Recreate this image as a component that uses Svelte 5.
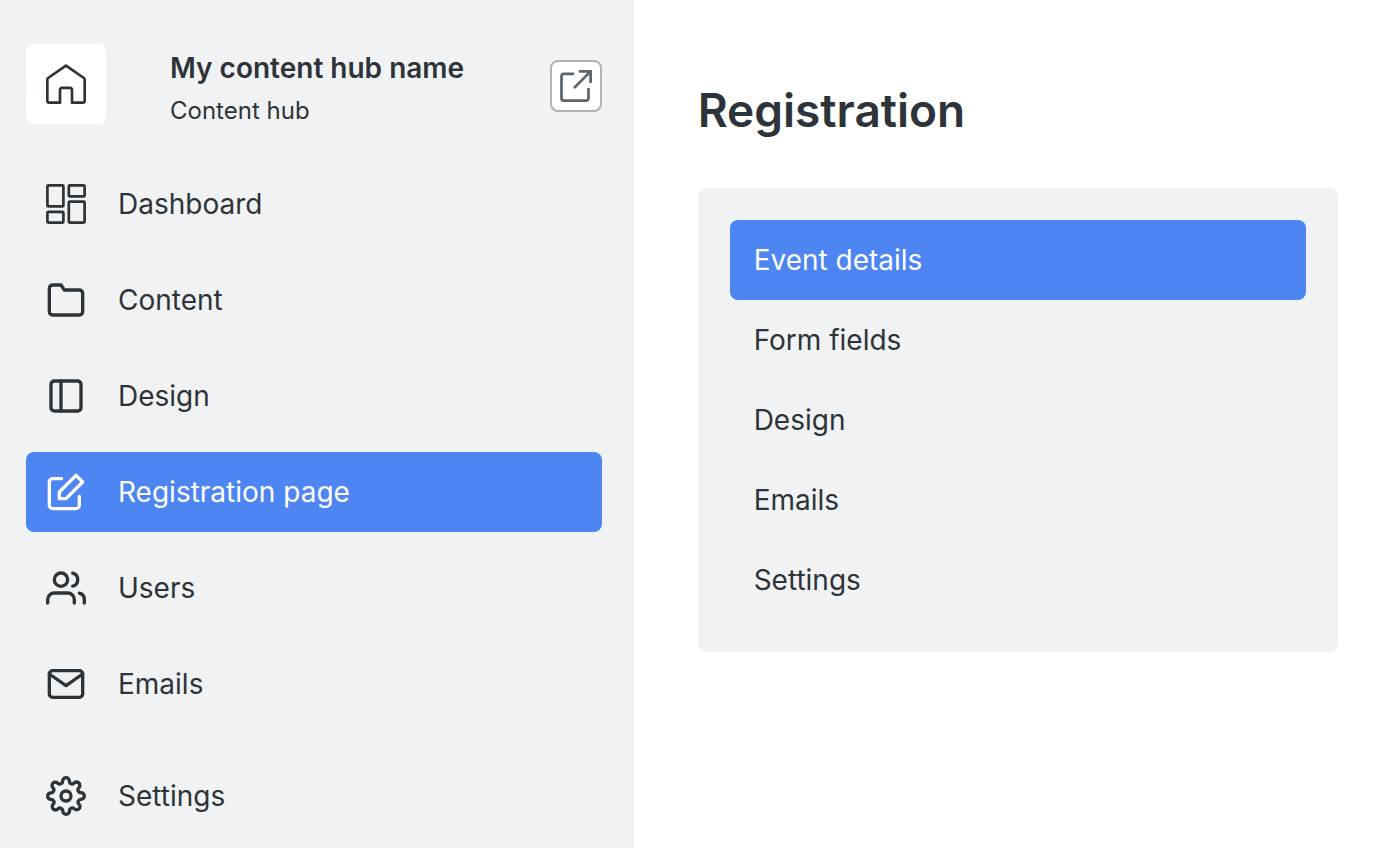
<script lang="ts">
	// Content hub admin: main navigation rail on the left, the registration
	// section with its own sub menu on the right.
	type IconName = 'dashboard' | 'folder' | 'sidebar' | 'edit' | 'users' | 'mail' | 'settings';

	const navItems: { id: string; label: string; icon: IconName }[] = [
		{ id: 'dashboard', label: 'Dashboard', icon: 'dashboard' },
		{ id: 'content', label: 'Content', icon: 'folder' },
		{ id: 'design', label: 'Design', icon: 'sidebar' },
		{ id: 'registration', label: 'Registration page', icon: 'edit' },
		{ id: 'users', label: 'Users', icon: 'users' },
		{ id: 'emails', label: 'Emails', icon: 'mail' },
		{ id: 'settings', label: 'Settings', icon: 'settings' }
	];

	const sections = ['Event details', 'Form fields', 'Design', 'Emails', 'Settings'];

	let activeNav = $state('registration');
	let activeSection = $state('Event details');
</script>

{#snippet icon(name: IconName)}
	{#if name === 'dashboard'}
		<svg class="icon thin" viewBox="0 0 40 40" aria-hidden="true">
			<rect x="1.4" y="1.4" width="16" height="21" rx="1" />
			<rect x="22.8" y="1.4" width="15.8" height="11" rx="1" />
			<rect x="1.4" y="27.8" width="16" height="10.8" rx="1" />
			<rect x="22.8" y="17.6" width="15.8" height="21" rx="1" />
		</svg>
	{:else}
		<svg class="icon" viewBox="0 0 24 24" aria-hidden="true">
			{#if name === 'folder'}
				<path d="M22 19a2 2 0 0 1-2 2H4a2 2 0 0 1-2-2V5a2 2 0 0 1 2-2h5l2 3h9a2 2 0 0 1 2 2z" />
			{:else if name === 'sidebar'}
				<rect x="3" y="3" width="18" height="18" rx="2" />
				<path d="M9 3v18" />
			{:else if name === 'edit'}
				<path d="M20 14.66V20a2 2 0 0 1-2 2H4a2 2 0 0 1-2-2V6a2 2 0 0 1 2-2h5.34" />
				<polygon points="18 2 22 6 12 16 8 16 8 12 18 2" />
			{:else if name === 'users'}
				<path d="M17 21v-2a4 4 0 0 0-4-4H5a4 4 0 0 0-4 4v2" />
				<circle cx="9" cy="7" r="4" />
				<path d="M23 21v-2a4 4 0 0 0-3-3.87" />
				<path d="M16 3.13a4 4 0 0 1 0 7.75" />
			{:else if name === 'mail'}
				<path d="M4 4h16c1.1 0 2 .9 2 2v12c0 1.1-.9 2-2 2H4c-1.1 0-2-.9-2-2V6c0-1.1.9-2 2-2z" />
				<polyline points="22 6 12 13 2 6" />
			{:else if name === 'settings'}
				<circle cx="12" cy="12" r="3" />
				<path
					d="M19.4 15a1.65 1.65 0 0 0 .33 1.82l.06.06a2 2 0 0 1 0 2.83 2 2 0 0 1-2.83 0l-.06-.06a1.65 1.65 0 0 0-1.82-.33 1.65 1.65 0 0 0-1 1.51V21a2 2 0 0 1-2 2 2 2 0 0 1-2-2v-.09A1.65 1.65 0 0 0 9 19.4a1.65 1.65 0 0 0-1.82.33l-.06.06a2 2 0 0 1-2.83 0 2 2 0 0 1 0-2.83l.06-.06a1.65 1.65 0 0 0 .33-1.82 1.65 1.65 0 0 0-1.51-1H3a2 2 0 0 1-2-2 2 2 0 0 1 2-2h.09A1.65 1.65 0 0 0 4.6 9a1.65 1.65 0 0 0-.33-1.82l-.06-.06a2 2 0 0 1 0-2.83 2 2 0 0 1 2.83 0l.06.06a1.65 1.65 0 0 0 1.82.33H9a1.65 1.65 0 0 0 1-1.51V3a2 2 0 0 1 2-2 2 2 0 0 1 2 2v.09a1.65 1.65 0 0 0 1 1.51 1.65 1.65 0 0 0 1.82-.33l.06-.06a2 2 0 0 1 2.83 0 2 2 0 0 1 0 2.83l-.06.06a1.65 1.65 0 0 0-.33 1.82V9a1.65 1.65 0 0 0 1.51 1H21a2 2 0 0 1 2 2 2 2 0 0 1-2 2h-.09a1.65 1.65 0 0 0-1.51 1z"
				/>
			{/if}
		</svg>
	{/if}
{/snippet}

<div class="layout">
	<aside class="rail">
		<header class="hub">
			<a class="home" href="#home" aria-label="Home">
				<svg class="icon thin" viewBox="0 0 40 40" aria-hidden="true">
					<path
						d="M3 38.7a1.7 1.7 0 0 1-1.7-1.7V15.6a2 2 0 0 1 .8-1.6L20 1.6 37.900 14a2 2 0 0 1 .8 1.6V37a1.700 1.700 0 0 1-1.700 1.700H26V26a2.200 2.200 0 0 0-2.200-2.200h-7.600A2.200 2.200 0 0 0 14 26v12.700z"
					/>
				</svg>
			</a>
			<div class="hub-text">
				<p class="hub-name">My content hub name</p>
				<p class="hub-type">Content hub</p>
			</div>
			<button class="open" type="button" aria-label="Open content hub">
				<svg class="open-icon" viewBox="0 0 32 32" aria-hidden="true">
					<path d="M13 3.8H4a2.5 2.5 0 0 0-2.5 2.5v21.900a2.500 2.500 0 0 0 2.500 2.500h22a2.500 2.500 0 0 0 2.500-2.500V19" />
					<path d="M20 1.4h10.600V12M30.600 1.400L14.800 17.200" />
				</svg>
			</button>
		</header>

		<nav class="nav" aria-label="Content hub">
			{#each navItems as item (item.id)}
				<a
					href="#{item.id}"
					class="nav-link"
					class:active={activeNav === item.id}
					class:apart={item.id === 'settings'}
					aria-current={activeNav === item.id ? 'page' : undefined}
					onclick={() => (activeNav = item.id)}
				>
					{@render icon(item.icon)}
					<span>{item.label}</span>
				</a>
			{/each}
		</nav>
	</aside>

	<main class="page">
		<h1>Registration</h1>
		<nav class="panel" aria-label="Registration">
			{#each sections as section (section)}
				<a
					href="#{section.toLowerCase().replace(' ', '-')}"
					class="panel-link"
					class:active={activeSection === section}
					onclick={() => (activeSection = section)}
				>
					{section}
				</a>
			{/each}
		</nav>
	</main>
</div>

<style>
	:global(body) {
		background: #fff;
	}
	.layout {
		display: grid;
		grid-template-columns: 5fr 6fr;
		min-height: 100vh;
		color: #2d3439;
		font-family: Inter, 'Liberation Sans', sans-serif;
		font-size: 28px;
		line-height: 40px;
	}

	/* Left rail */
	.rail {
		box-sizing: border-box;
		padding: 44px 32px 12px 26px;
		background: #f0f2f4;
	}
	.hub {
		display: flex;
		align-items: flex-start;
		min-height: 84px;
		margin-bottom: 36px;
	}
	.home {
		display: flex;
		align-items: center;
		justify-content: center;
		flex: 0 0 auto;
		width: 80px;
		height: 80px;
		border-radius: 8px;
		background: #fff;
		color: inherit;
	}
	.hub-text {
		flex: 1;
		margin-left: 64px;
		padding-top: 4px;
	}
	.hub-name,
	.hub-type {
		margin: 0;
	}
	.hub-name {
		font-weight: 600;
	}
	.hub-type {
		margin-top: 8px;
		font-size: 24px;
		line-height: 30px;
	}
	.open {
		display: flex;
		align-items: center;
		justify-content: center;
		box-sizing: border-box;
		flex: 0 0 auto;
		width: 52px;
		height: 52px;
		margin-top: 16px;
		padding: 0;
		border: 2px solid #adb4bb;
		border-radius: 8px;
		background: #fff;
		color: #5a656d;
		cursor: pointer;
	}

	.icon,
	.open-icon {
		display: block;
		flex: 0 0 auto;
		fill: none;
		stroke: currentColor;
		stroke-linecap: round;
		stroke-linejoin: round;
	}
	.icon {
		width: 40px;
		height: 40px;
		stroke-width: 2;
	}
	.icon.thin {
		stroke-width: 2.7;
	}
	.open-icon {
		width: 32px;
		height: 32px;
		stroke-width: 2.7;
		stroke-linejoin: miter;
	}

	.nav {
		display: flex;
		flex-direction: column;
		gap: 16px;
	}
	.nav-link,
	.panel-link {
		display: flex;
		align-items: center;
		height: 80px;
		border-radius: 8px;
		color: inherit;
		text-decoration: none;
	}
	.nav-link {
		gap: 32px;
		padding: 0 20px;
	}
	.nav-link.apart {
		margin-top: 16px;
	}
	/* also has to win over the inherited link colour above */
	.nav-link.active,
	.panel-link.active {
		background: #4d85f2;
		color: #fff;
	}

	/* Right side */
	.page {
		padding: 80px 56px 48px 64px;
	}
	h1 {
		margin: 0 0 48px;
		font-size: 46px;
		font-weight: 600;
		line-height: 60px;
	}
	.panel {
		padding: 32px;
		border-radius: 8px;
		background: #f0f2f4;
	}
	.panel-link {
		padding: 0 24px;
	}
</style>
